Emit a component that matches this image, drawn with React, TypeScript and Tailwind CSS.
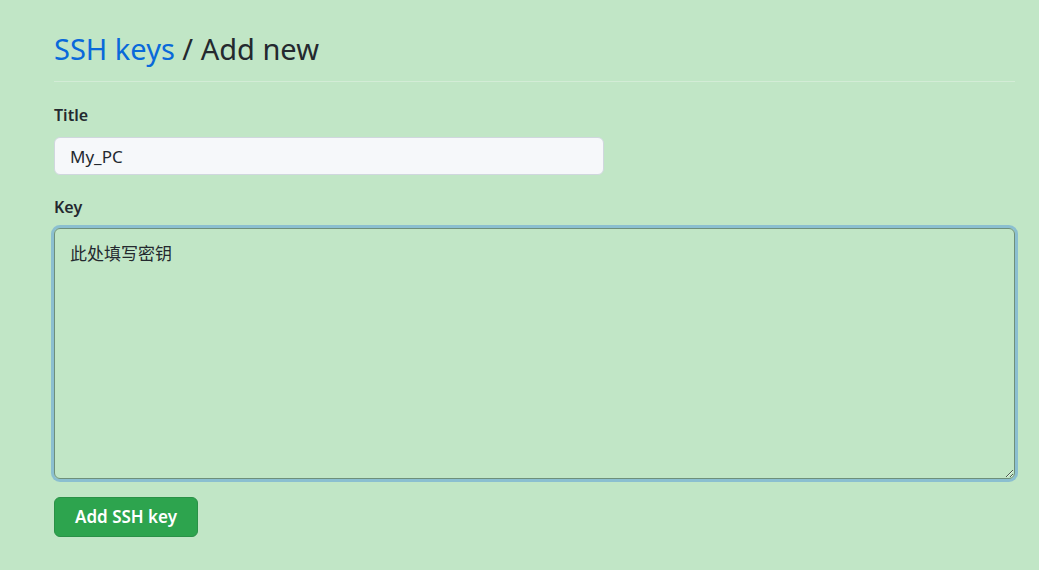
import { useState } from "react"

export default function App() {
  const [title, setTitle] = useState("My_PC")
  const [key, setKey] = useState("此处填写密钥")

  return (
    <div
      className="min-h-[570px] bg-[#c1e6c6] pl-[54px] pr-[24px] pt-[29px] text-[#24292f]"
      style={{ fontFamily: '"Noto Sans", "Noto Sans CJK SC", sans-serif' }}
    >
      <div className="border-b border-[#d3ecd6] pb-[12px]">
        <h1 className="text-[29px] font-normal leading-[40px]">
          <a href="#" className="text-[#0969da]">SSH keys</a> / Add new
        </h1>
      </div>

      <form className="pt-[22px]" onSubmit={(e) => e.preventDefault()}>
        <label className="block text-[16px] font-semibold leading-[22px]">Title</label>
        <input
          value={title}
          onChange={(e) => setTitle(e.target.value)}
          className="mt-[11px] block h-[38px] w-[550px] rounded-[6px] border border-[#d0d7de] bg-[#f6f8fa] px-[15px] text-[17px] text-[#24292f] outline-none"
        />

        <label className="mt-[21px] block text-[16px] font-semibold leading-[22px]">Key</label>
        <textarea
          value={key}
          onChange={(e) => setKey(e.target.value)}
          className="mt-[10px] block h-[251px] w-full resize-y rounded-[6px] border border-[#6e8f7a] bg-transparent px-[15px] py-[12px] text-[17px] leading-[26px] text-[#24292f] shadow-[0_0_0_3px_#8bbfd0] outline-none"
        />

        <button
          type="submit"
          className="mt-[18px] h-[40px] rounded-[6px] border border-[#2a9147] bg-[#2da44e] px-[20px] text-[17px] font-semibold text-white"
        >
          Add SSH key
        </button>
      </form>
    </div>
  )
}
